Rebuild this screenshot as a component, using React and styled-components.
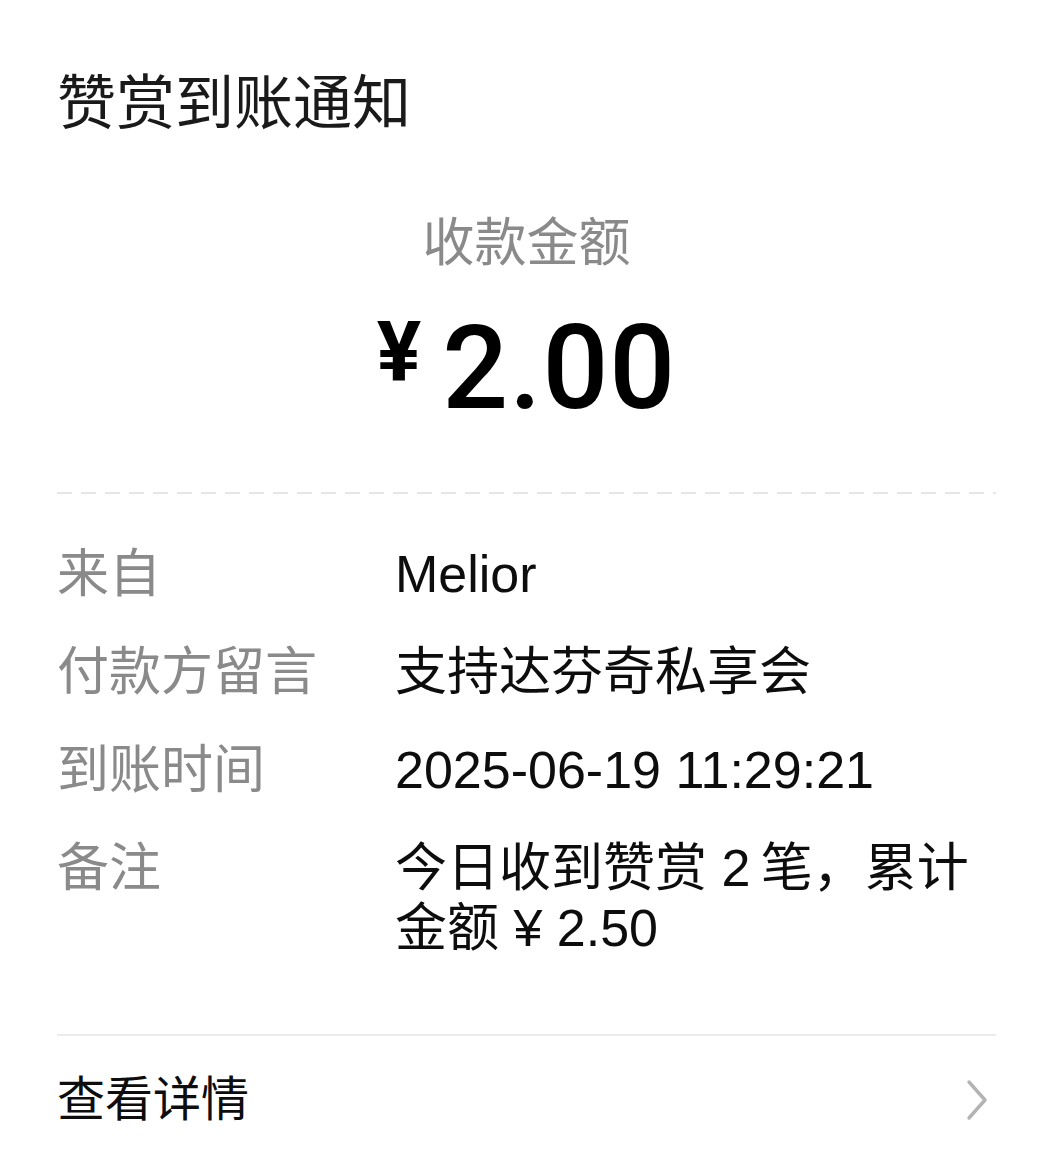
import React from "react";
import styled, { createGlobalStyle } from "styled-components";

const GlobalStyle = createGlobalStyle`
  html, body {
    margin: 0;
    padding: 0;
    background: #ffffff;
  }
  body {
    font-family: "Liberation Sans", "Noto Sans CJK SC", sans-serif;
    -webkit-font-smoothing: antialiased;
  }
`;

const Page = styled.div`
  width: 1053px;
  min-height: 1164px;
  box-sizing: border-box;
  padding: 64px 57px 0;
  background: #ffffff;
  display: flex;
  flex-direction: column;
`;

const Title = styled.h1`
  margin: 0;
  font-size: 59px;
  line-height: 80px;
  font-weight: 400;
  color: #1a1a1a;
`;

const AmountBlock = styled.div`
  display: flex;
  flex-direction: column;
  align-items: center;
  margin-top: 63px;
`;

const AmountLabel = styled.div`
  font-size: 52px;
  line-height: 72px;
  color: #8a8a8a;
`;

const Amount = styled.div`
  display: flex;
  align-items: flex-start;
  margin-top: 31px;
  color: #000;
  font-family: Roboto, "Liberation Sans", sans-serif;
`;

const Currency = styled.span`
  font-size: 83px;
  line-height: 1;
  font-weight: 700;
  margin-top: 1px;
  margin-right: 21px;
`;

const Figure = styled.span`
  font-size: 116px;
  line-height: 116px;
  font-weight: 500;
  letter-spacing: 1px;
`;

const Dashed = styled.div`
  height: 2px;
  margin-top: 66px;
  background: repeating-linear-gradient(
    to right,
    #e6e6e6 0,
    #e6e6e6 15px,
    transparent 15px,
    transparent 24px
  );
`;

const Details = styled.div`
  display: flex;
  flex-direction: column;
  gap: 38px;
  margin-top: 50px;
`;

const Row = styled.div`
  display: grid;
  grid-template-columns: 338px 1fr;
  font-size: 52px;
  line-height: 60px;
`;

const Label = styled.div`
  color: #8a8a8a;
`;

const Value = styled.div`
  color: #0d0d0d;
  word-break: break-all;
`;

const Divider = styled.div`
  height: 2px;
  background: #ebebeb;
  margin-top: 76px;
`;

const LinkRow = styled.div`
  display: flex;
  align-items: center;
  justify-content: space-between;
  height: 128px;
`;

const LinkText = styled.span`
  font-size: 48px;
  line-height: 60px;
  color: #0d0d0d;
`;

const Chevron = () => (
  <svg width="28" height="44" viewBox="0 0 28 44" style={{ marginRight: 4 }}>
    <polyline
      points="5,4 21,22 5,40"
      fill="none"
      stroke="#b3b3b3"
      strokeWidth="3.4"
      strokeLinecap="round"
      strokeLinejoin="round"
    />
  </svg>
);

const rows = [
  { label: "来自", value: "Melior" },
  { label: "付款方留言", value: "支持达芬奇私享会" },
  { label: "到账时间", value: "2025-06-19 11:29:21" },
  { label: "备注", value: "今日收到赞赏 2\u2009笔，累计金额 ¥ 2.50" },
];

export default function App() {
  return (
    <>
      <GlobalStyle />
      <Page>
        <Title>赞赏到账通知</Title>
        <AmountBlock>
          <AmountLabel>收款金额</AmountLabel>
          <Amount>
            <Currency>¥</Currency>
            <Figure>2.00</Figure>
          </Amount>
        </AmountBlock>
        <Dashed />
        <Details>
          {rows.map((r) => (
            <Row key={r.label}>
              <Label>{r.label}</Label>
              <Value>{r.value}</Value>
            </Row>
          ))}
        </Details>
        <Divider />
        <LinkRow>
          <LinkText>查看详情</LinkText>
          <Chevron />
        </LinkRow>
      </Page>
    </>
  );
}
